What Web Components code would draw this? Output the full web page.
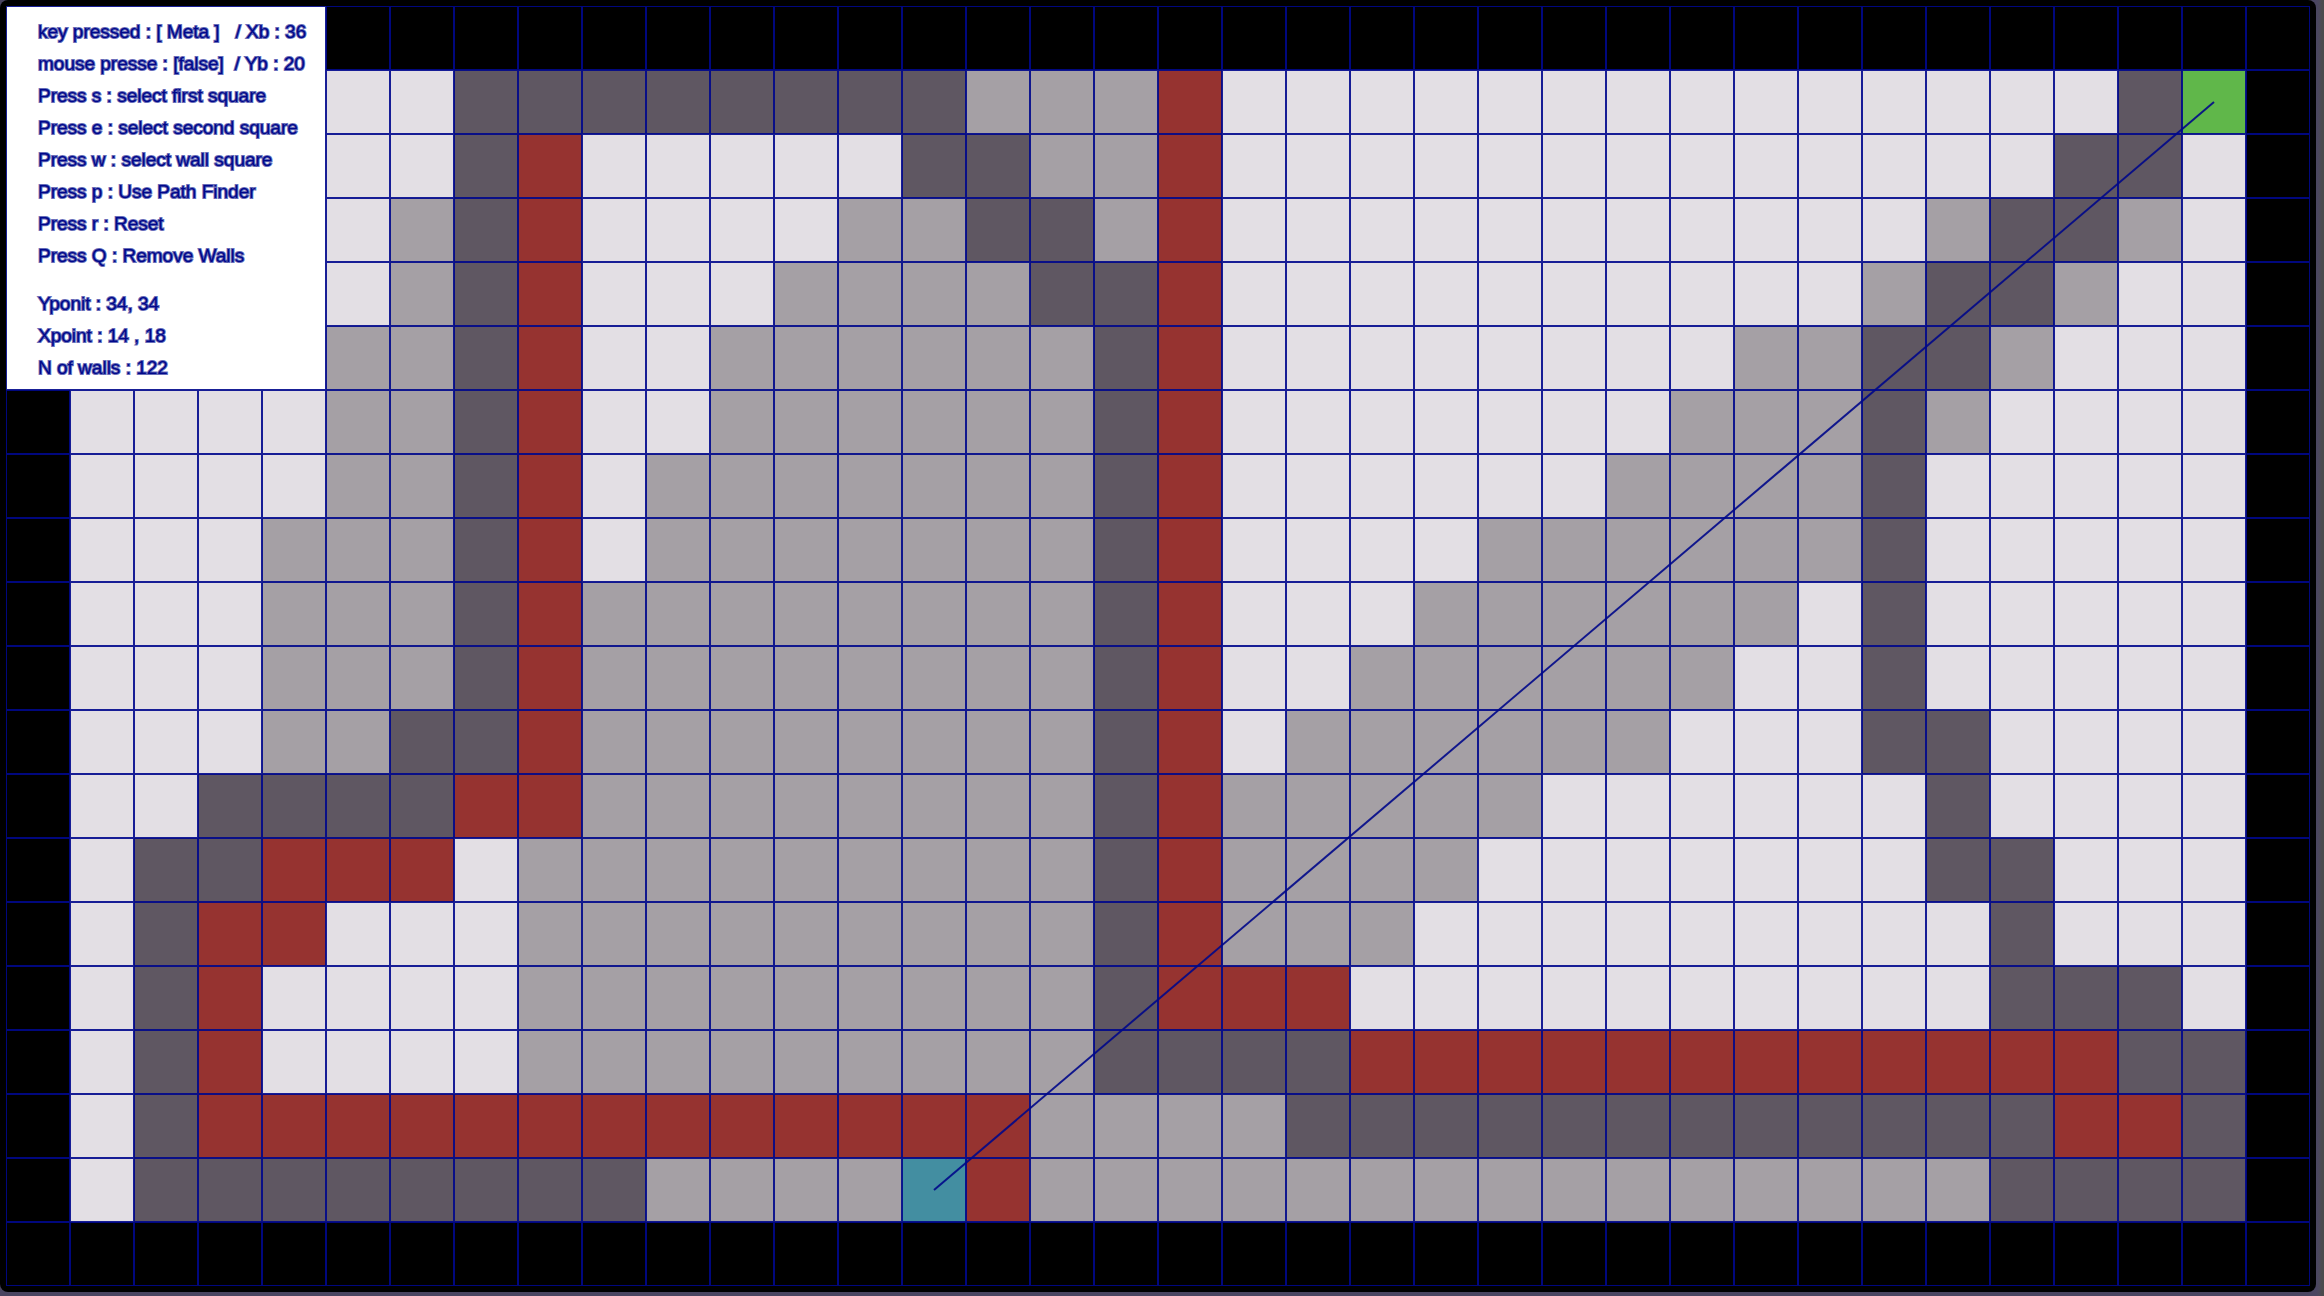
<!DOCTYPE html>
<html lang="en">
<head>
<meta charset="utf-8">
<title>Path Finder</title>
<style>
  html { min-height: 100%; background: linear-gradient(to right, #4a4561 0, #4a4561 calc(100% - 8px), #4c485c calc(100% - 5px), #4a4a4c calc(100% - 2px)); }
  body { margin: 0 8px 4px 0; }
</style>
</head>
<body>
<path-window>
  <path-grid>
    <info-panel>
      <info-line>key pressed : [ Meta ]   / Xb : 36</info-line>
      <info-line>mouse presse : [false]  / Yb : 20</info-line>
      <info-line>Press s : select first square</info-line>
      <info-line>Press e : select second square</info-line>
      <info-line>Press w : select wall square</info-line>
      <info-line>Press p : Use Path Finder</info-line>
      <info-line>Press r : Reset</info-line>
      <info-line>Press Q : Remove Walls</info-line>
      <info-line slot="stats">Yponit : 34, 34</info-line>
      <info-line slot="stats">Xpoint : 14 , 18</info-line>
      <info-line slot="stats">N of walls : 122</info-line>
    </info-panel>
  </path-grid>
</path-window>
<script>
  const COLS = 36;
  const ROWS = 20;
  const PANEL_COLS = 5;
  const PANEL_ROWS = 6;

  // Each row is a list of runs: a kind of square, then how many.
  // k border, w free, g visited, d path, r wall, s start, e end
  const MAP = [
    'k36',
    'k1 w6 d8 g3 r1 w14 d1 e1 k1',
    'k1 w6 d1 r1 w5 d2 g2 r1 w13 d2 w1 k1',
    'k1 w5 g1 d1 r1 w4 g2 d2 g1 r1 w11 g1 d2 g1 w1 k1',
    'k1 w5 g1 d1 r1 w3 g4 d2 r1 w10 g1 d2 g1 w2 k1',
    'k1 w4 g2 d1 r1 w2 g6 d1 r1 w8 g2 d2 g1 w3 k1',
    'k1 w4 g2 d1 r1 w2 g6 d1 r1 w7 g3 d1 g1 w4 k1',
    'k1 w4 g2 d1 r1 w1 g7 d1 r1 w6 g4 d1 w5 k1',
    'k1 w3 g3 d1 r1 w1 g7 d1 r1 w4 g6 d1 w5 k1',
    'k1 w3 g3 d1 r1 g8 d1 r1 w3 g6 w1 d1 w5 k1',
    'k1 w3 g3 d1 r1 g8 d1 r1 w2 g6 w2 d1 w5 k1',
    'k1 w3 g2 d2 r1 g8 d1 r1 w1 g6 w3 d2 w4 k1',
    'k1 w2 d4 r2 g8 d1 r1 g5 w6 d1 w4 k1',
    'k1 w1 d2 r3 w1 g9 d1 r1 g4 w7 d2 w3 k1',
    'k1 w1 d1 r2 w3 g9 d1 r1 g3 w9 d1 w3 k1',
    'k1 w1 d1 r1 w4 g9 d1 r3 w10 d3 w1 k1',
    'k1 w1 d1 r1 w4 g9 d4 r12 d2 k1',
    'k1 w1 d1 r13 g4 d12 r2 d1 k1',
    'k1 w1 d8 g4 s1 r1 g15 d4 k1',
    'k36'
  ].map(row => row.split(' ').map(run => run[0].repeat(+run.slice(1))).join(''));

  class PathWindow extends HTMLElement {
    constructor() {
      super();
      this.attachShadow({ mode: 'open' }).innerHTML = `
        <style>
          :host { display: block; padding: 6px; background: #000; border-radius: 8px; }
        </style>
        <slot></slot>`;
    }
  }

  class GridSquare extends HTMLElement {
    constructor() {
      super();
      this.attachShadow({ mode: 'open' }).innerHTML = `
        <style>
          :host { display: block; background: #000; box-shadow: inset 0 0 0 1px rgba(0, 8, 140, .9); }
          :host([kind="w"]) { background: #e3dfe4; }
          :host([kind="g"]) { background: #a5a0a5; }
          :host([kind="d"]) { background: #5f5762; }
          :host([kind="r"]) { background: #963330; }
          :host([kind="s"]) { background: #438ea1; }
          :host([kind="e"]) { background: #60b74a; }
        </style>`;
    }
  }

  class PathGrid extends HTMLElement {
    constructor() {
      super();
      this.attachShadow({ mode: 'open' }).innerHTML = `
        <style>
          :host {
            display: grid; position: relative; aspect-ratio: ${COLS} / ${ROWS};
            grid-template: repeat(${ROWS}, 1fr) / repeat(${COLS}, 1fr);
          }
          ::slotted(info-panel) { grid-column: 1 / span ${PANEL_COLS}; grid-row: 1 / span ${PANEL_ROWS}; }
          svg { position: absolute; inset: 0; width: 100%; height: 100%; pointer-events: none; }
          line { stroke: #00088a; stroke-opacity: .9; stroke-width: 2; vector-effect: non-scaling-stroke; }
        </style>
        <slot></slot>`;
      const centre = {};
      MAP.forEach((row, y) => [...row].forEach((kind, x) => {
        if (kind === 's' || kind === 'e') centre[kind] = [x + .5, y + .5];
        if (x < PANEL_COLS && y < PANEL_ROWS) return;
        const square = document.createElement('grid-square');
        square.setAttribute('kind', kind);
        this.shadowRoot.append(square);
      }));
      const [x1, y1] = centre.s, [x2, y2] = centre.e;
      this.shadowRoot.append(document.createRange().createContextualFragment(
        `<svg viewBox="0 0 ${COLS} ${ROWS}" aria-hidden="true"><line x1="${x1}" y1="${y1}" x2="${x2}" y2="${y2}"/></svg>`));
    }
  }

  class InfoPanel extends HTMLElement {
    constructor() {
      super();
      this.attachShadow({ mode: 'open' }).innerHTML = `
        <style>
          :host {
            display: flex; flex-direction: column; gap: 16px; padding: 10px 0 0 32px;
            background: #fff; box-shadow: inset 0 0 0 1px rgba(0, 8, 140, .9);
            color: #00088a; font: 19px/32px "Liberation Sans", Helvetica, Arial, sans-serif;
          }
        </style>
        <div><slot></slot></div>
        <div><slot name="stats"></slot></div>`;
    }
  }

  class InfoLine extends HTMLElement {
    constructor() {
      super();
      this.attachShadow({ mode: 'open' }).innerHTML = `
        <style>
          :host { display: block; -webkit-text-stroke: 2px rgba(0, 8, 138, .6); }
          slot { white-space: pre; }
        </style>
        <slot></slot>`;
    }
  }

  customElements.define('path-window', PathWindow);
  customElements.define('grid-square', GridSquare);
  customElements.define('path-grid', PathGrid);
  customElements.define('info-panel', InfoPanel);
  customElements.define('info-line', InfoLine);
</script>
</body>
</html>
